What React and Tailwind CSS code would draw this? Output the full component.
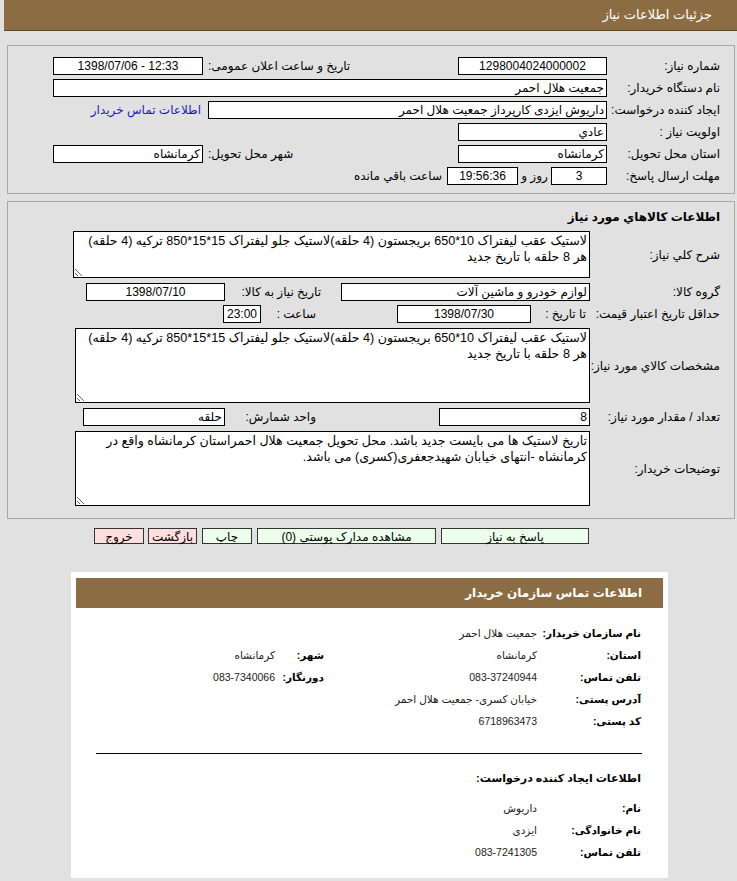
import React from "react";

const box = "h-[18px] border border-black bg-white leading-[16px] px-[2px] whitespace-nowrap overflow-hidden";
const ta = "block border border-black bg-white px-[2px] py-[1px] text-[12.6px] leading-[16px] text-black font-['Liberation_Sans','DejaVu_Sans',sans-serif] outline-none";

function Row({ children, className = "" }) {
  return <div className={"flex items-center h-[18px] " + className}>{children}</div>;
}

export default function App() {
  return (
    <div dir="rtl" className="min-h-[881px] bg-[#e1e1e1] text-black text-[12px] font-['Liberation_Sans','DejaVu_Sans',sans-serif] overflow-hidden">
      {/* header */}
      <div className="ml-[4px] h-[31px] bg-[#8c6d43] border-b border-[#5b4527] flex items-center pr-[25px] text-white text-[13px]">
        جزئیات اطلاعات نیاز
      </div>

      {/* panel 1 */}
      <div className="ml-[7px] mr-[2px] mt-[14px] h-[149px] border border-[#a8a8a8] pt-[11px] flex flex-col gap-[4px]">
        <Row>
          <div className="w-[127px] pr-[14px] whitespace-nowrap">شماره نیاز:</div>
          <div dir="ltr" className={box + " w-[149px] text-center"}>1298004024000002</div>
          <div className="w-[255px] pl-[5px] text-left whitespace-nowrap">تاریخ و ساعت اعلان عمومی:</div>
          <div dir="ltr" className={box + " w-[150px] text-center"}>1398/07/06 - 12:33</div>
        </Row>
        <Row>
          <div className="w-[127px] pr-[14px] whitespace-nowrap">نام دستگاه خریدار:</div>
          <div className={box + " w-[554px] text-right"}>جمعیت هلال احمر</div>
        </Row>
        <Row>
          <div className="w-[127px] pr-[14px] whitespace-nowrap">ایجاد کننده درخواست:</div>
          <div className={box + " w-[399px] text-right"}>داریوش ایزدی کارپرداز جمعیت هلال احمر</div>
          <a className="mr-[7px] text-[#1a1ac8] whitespace-nowrap">اطلاعات تماس خریدار</a>
        </Row>
        <Row>
          <div className="w-[127px] pr-[14px] whitespace-nowrap">اولویت نیاز :</div>
          <div className={box + " w-[149px] text-right"}>عادي</div>
        </Row>
        <Row>
          <div className="w-[127px] pr-[14px] whitespace-nowrap">استان محل تحویل:</div>
          <div className={box + " w-[149px] text-right"}>کرمانشاه</div>
          <div className="w-[255px] pl-[5px] text-left whitespace-nowrap">شهر محل تحویل:</div>
          <div className={box + " w-[150px] text-right"}>کرمانشاه</div>
        </Row>
        <Row>
          <div className="w-[127px] pr-[14px] whitespace-nowrap">مهلت ارسال پاسخ:</div>
          <div className={box + " w-[56px] text-center"}>3</div>
          <div className="w-[33px] text-center whitespace-nowrap">روز و</div>
          <div dir="ltr" className={box + " w-[71px] text-center"}>19:56:36</div>
          <div className="mr-[5px] whitespace-nowrap">ساعت باقي مانده</div>
        </Row>
      </div>

      {/* panel 2 */}
      <div className="ml-[7px] mr-[2px] mt-[7px] h-[318px] border border-[#a8a8a8] pt-[7px]">
        <div className="pr-[14px] h-[16px] leading-[16px] font-bold whitespace-nowrap">اطلاعات کالاهاي مورد نياز</div>
        <div className="mt-[6px] flex items-center">
          <div className="w-[144px] pr-[14px] whitespace-nowrap">شرح کلي نیاز:</div>
          <textarea readOnly dir="rtl" className={ta + " w-[517px] h-[47px]"} defaultValue={"لاستیک عقب لیفتراک 10*650 بریجستون (4 حلقه)لاستیک جلو لیفتراک 15*15*850 ترکیه (4 حلقه) هر 8 حلقه با تاریخ جدید"} />
        </div>
        <Row className="mt-[5px]">
          <div className="w-[144px] pr-[14px] whitespace-nowrap">گروه کالا:</div>
          <div className={box + " w-[249px] text-right"}>لوازم خودرو و ماشین آلات</div>
          <div className="w-[116px] pr-[20px] whitespace-nowrap">تاریخ نیاز به کالا:</div>
          <div dir="ltr" className={box + " w-[139px] text-center"}>1398/07/10</div>
        </Row>
        <Row className="mt-[4px]">
          <div className="w-[144px] pr-[14px] whitespace-nowrap">حداقل تاریخ اعتبار قیمت:</div>
          <div className="w-[59px] pr-[4px] whitespace-nowrap">تا تاریخ :</div>
          <div dir="ltr" className={box + " w-[134px] text-center"}>1398/07/30</div>
          <div className="w-[136px] pr-[81px] whitespace-nowrap">ساعت :</div>
          <div dir="ltr" className={box + " w-[38px] text-center"}>23:00</div>
        </Row>
        <div className="mt-[5px] flex items-center">
          <div className="w-[144px] pr-[14px] whitespace-nowrap">مشخصات کالاي مورد نياز:</div>
          <textarea readOnly dir="rtl" className={ta + " w-[515px] h-[75px]"} defaultValue={"لاستیک عقب لیفتراک 10*650 بریجستون (4 حلقه)لاستیک جلو لیفتراک 15*15*850 ترکیه (4 حلقه) هر 8 حلقه با تاریخ جدید"} />
        </div>
        <Row className="mt-[5px]">
          <div className="w-[144px] pr-[14px] whitespace-nowrap">تعداد / مقدار مورد نیاز:</div>
          <div className={box + " w-[151px] text-right"}>8</div>
          <div className="w-[214px] pr-[123px] whitespace-nowrap">واحد شمارش:</div>
          <div className={box + " w-[142px] text-right"}>حلقه</div>
        </Row>
        <div className="mt-[5px] flex items-center">
          <div className="w-[144px] pr-[14px] whitespace-nowrap">توضیحات خریدار:</div>
          <textarea readOnly dir="rtl" className={ta + " w-[515px] h-[75px]"} defaultValue={"تاریخ لاستیک ها می بایست جدید باشد. محل تحویل جمعیت هلال احمراستان کرمانشاه واقع در کرمانشاه -انتهای خیابان شهیدجعفری(کسری) می باشد."} />
        </div>
      </div>

      {/* buttons */}
      <div className="mt-[9px] mr-[148px] flex items-center h-[16px]">
        <div className="w-[148px] h-[16px] border border-[#333] bg-[#ebffeb] text-center leading-[16px]">پاسخ به نیاز</div>
        <div className="mr-[5px] w-[179px] h-[16px] border border-[#333] bg-[#ebffeb] text-center leading-[16px] whitespace-nowrap">مشاهده مدارک پوستي (0)</div>
        <div className="mr-[5px] w-[50px] h-[16px] border border-[#333] bg-[#ebffeb] text-center leading-[16px]">چاپ</div>
        <div className="mr-[5px] w-[49px] h-[16px] border border-[#333] bg-[#ffdede] text-center leading-[16px]">بازگشت</div>
        <div className="mr-[4px] w-[50px] h-[16px] border border-[#333] bg-[#ffdede] text-center leading-[16px]">خروج</div>
      </div>

      {/* contact card */}
      <div className="mt-[28px] mr-[69px] w-[597px] h-[306px] bg-white pt-[6px] px-[5px]">
        <div className="h-[30px] bg-[#8c6d43] flex items-center pr-[21px] text-white font-bold text-[12px]">اطلاعات تماس سازمان خریدار</div>
        <div className="pr-[22px] mt-[15px] text-[11px]">
          {[
            ["نام سازمان خریدار:", "جمعیت هلال احمر"],
            ["استان:", "کرمانشاه", "شهر:", "کرمانشاه"],
            ["تلفن تماس:", "083-37240944", "دورنگار:", "083-7340066"],
            ["آدرس پستی:", "خیابان کسری- جمعیت هلال احمر"],
            ["کد پستی:", "6718963473"],
          ].map((r, i) => (
            <div key={i} className="flex items-center h-[22px]">
              <div className="w-[104px] font-bold text-[10.5px] whitespace-nowrap">{r[0]}</div>
              <div className="w-[213px] text-[#222] text-[10.5px] whitespace-nowrap">{r[1]}</div>
              {r[2] && <div className="w-[49px] font-bold text-[10.5px] whitespace-nowrap">{r[2]}</div>}
              {r[3] && <div className="text-[#222] text-[10.5px] whitespace-nowrap">{r[3]}</div>}
            </div>
          ))}
        </div>
        <div className="mt-[20px] ml-[20px] mr-[21px] h-[1px] bg-black"></div>
        <div className="pr-[22px] mt-[16px] h-[16px] leading-[16px] font-bold text-[11px]">اطلاعات ایجاد کننده درخواست:</div>
        <div className="pr-[22px] mt-[12px] text-[11px]">
          {[
            ["نام:", "داریوش"],
            ["نام خانوادگی:", "ایزدی"],
            ["تلفن تماس:", "083-7241305"],
          ].map((r, i) => (
            <div key={i} className="flex items-center h-[22px]">
              <div className="w-[104px] font-bold text-[10.5px] whitespace-nowrap">{r[0]}</div>
              <div className="w-[213px] text-[#222] text-[10.5px] whitespace-nowrap">{r[1]}</div>
            </div>
          ))}
        </div>
      </div>
    </div>
  );
}
